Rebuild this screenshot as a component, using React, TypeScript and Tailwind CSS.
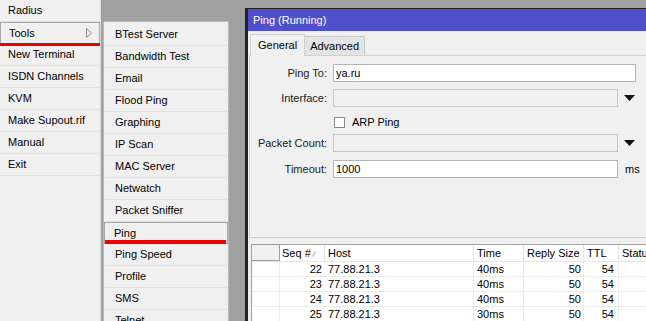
import React from "react";

const leftItems = ["Radius", "Tools", "New Terminal", "ISDN Channels", "KVM", "Make Supout.rif", "Manual", "Exit"];

const toolItems = [
  "BTest Server",
  "Bandwidth Test",
  "Email",
  "Flood Ping",
  "Graphing",
  "IP Scan",
  "MAC Server",
  "Netwatch",
  "Packet Sniffer",
  "Ping",
  "Ping Speed",
  "Profile",
  "SMS",
  "Telnet",
];

const rows = [
  { seq: 22, host: "77.88.21.3", time: "40ms", size: 50, ttl: 54 },
  { seq: 23, host: "77.88.21.3", time: "40ms", size: 50, ttl: 54 },
  { seq: 24, host: "77.88.21.3", time: "40ms", size: 50, ttl: 54 },
  { seq: 25, host: "77.88.21.3", time: "30ms", size: 50, ttl: 54 },
];

const DropArrow = () => (
  <svg width="11" height="6" viewBox="0 0 11 6" className="ml-[6px]">
    <polygon points="0,0 11,0 5.5,6" fill="#111" />
  </svg>
);

const Field = ({ label, value, disabled, arrow, suffix, mt }: { label: string; value?: string; disabled?: boolean; arrow?: boolean; suffix?: string; mt: string }) => (
  <div className={`flex items-center h-[18px] ${mt}`}>
    <div className="w-[78px] text-right pr-[1px] text-[#1a1a1a]">{label}</div>
    <div
      className={`ml-[5px] h-[18px] flex items-center px-[2px] border ${
        disabled ? "bg-[#f0f0f0] border-[#c8c8c8]" : "bg-white border-[#b4b4b4]"
      } ${arrow || suffix ? "w-[285px]" : "w-[303px]"}`}
    >
      {value}
    </div>
    {arrow && <DropArrow />}
    {suffix && <span className="ml-[7px]">{suffix}</span>}
  </div>
);

export default function App() {
  return (
    <div className="w-[646px] h-[321px] overflow-hidden flex bg-[#a0a0a0] text-[11px] text-black leading-none font-['Liberation_Sans',Arial,sans-serif]">
      {/* main menu */}
      <div className="w-[101px] h-full bg-[#f0f0f0] border-r border-[#dcdcdc] flex flex-col shrink-0">
        {leftItems.map((it) => (
          <div
            key={it}
            className={`relative h-[22px] flex items-center pl-[8px] shrink-0 ${
              it === "Tools" ? "border border-[#a8a8a8] pl-[7px]" : "border-b border-[#e2e2e2]"
            }`}
          >
            {it}
            {it === "Tools" && (
              <>
                <svg width="6" height="10" viewBox="0 0 6 10" className="absolute right-[7px] top-[5px]">
                  <polyline points="0.5,0.5 0.5,9.5 5.5,5 0.5,0.5" fill="none" stroke="#8a8a8a" strokeWidth="1" />
                </svg>
                <div className="absolute left-[-1px] right-[-1px] bottom-[-3px] h-[3px] bg-[#ee0000]" />
              </>
            )}
          </div>
        ))}
      </div>

      {/* tools submenu */}
      <div className="ml-[2px] mt-[21px] w-[126px] shrink-0 bg-[#f0f0f0] border-l border-t border-r border-[#b8b8b8] pt-[2px] flex flex-col">
        {toolItems.map((it) => (
          <div
            key={it}
            className={`relative h-[22px] shrink-0 flex items-center ${
              it === "Ping" ? "border border-[#a8a8a8] pl-[9px]" : "border-b border-[#e2e2e2] pl-[10px] mx-[1px]"
            }`}
          >
            {it}
            {it === "Ping" && <div className="absolute left-0 right-[1px] bottom-[-1px] h-[4px] bg-[#ee0000]" />}
          </div>
        ))}
      </div>

      {/* ping window */}
      <div className="ml-[16px] mt-[8px] flex-1 flex flex-col bg-[#f0f0f0] border-l-[3px] border-t border-[#222]">
        <div className="h-[22px] bg-[#5050cd] text-white flex items-center pl-[5px] shrink-0">Ping (Running)</div>

        <div className="flex items-end h-[24px] pl-[2px] shrink-0">
          <div className="h-[22px] px-[7px] flex items-center bg-[#f0f0f0] border-l border-t border-r border-[#d0d0d0] relative top-[1px] z-10">
            General
          </div>
          <div className="h-[19px] px-[5px] flex items-center bg-[#e4e4e4] border-t border-r border-[#c8c8c8]">Advanced</div>
        </div>

        <div className="ml-[1px] mr-[1px] h-[183px] shrink-0 border border-[#d0d0d0] flex flex-col">
          <Field label="Ping To:" value="ya.ru" mt="mt-[8px]" />
          <Field label="Interface:" disabled arrow mt="mt-[7px]" />
          <div className="flex items-center h-[18px] mt-[6px] pl-[84px]">
            <div className="w-[11px] h-[11px] bg-white border border-[#8a8a8a]" />
            <span className="ml-[7px]">ARP Ping</span>
          </div>
          <Field label="Packet Count:" disabled arrow mt="mt-[3px]" />
          <Field label="Timeout:" value="1000" suffix="ms" mt="mt-[8px]" />
        </div>

        <div className="mt-[6px] ml-[3px] flex-1 bg-white border-l border-t border-[#a0a0a0] flex flex-col">
          <div className="flex h-[17px] shrink-0 border-b border-[#e5e5e5]">
            <div className="w-[28px] shrink-0 bg-[#f0f0f0] border-r border-b border-[#a0a0a0]" />
            <div className="w-[45px] shrink-0 border-r border-[#e5e5e5] flex items-center pl-[2px] relative">
              Seq #
              <svg width="4" height="6" viewBox="0 0 4 6" className="absolute right-[8px] top-[6px]">
                <line x1="0.5" y1="5.5" x2="3.5" y2="0.5" stroke="#aaa" />
              </svg>
            </div>
            <div className="w-[149px] shrink-0 border-r border-[#e5e5e5] flex items-center pl-[3px]">Host</div>
            <div className="w-[50px] shrink-0 border-r border-[#e5e5e5] flex items-center pl-[3px]">Time</div>
            <div className="w-[60px] shrink-0 border-r border-[#e5e5e5] flex items-center pl-[3px]">Reply Size</div>
            <div className="w-[35px] shrink-0 border-r border-[#e5e5e5] flex items-center pl-[3px]">TTL</div>
            <div className="flex-1 flex items-center pl-[3px] whitespace-nowrap">Status</div>
          </div>
          {rows.map((r) => (
            <div key={r.seq} className="flex h-[15px] shrink-0 border-b border-[#ececec]">
              <div className="w-[28px] shrink-0 border-r border-[#ececec]" />
              <div className="w-[45px] shrink-0 flex items-center justify-end pr-[3px]">{r.seq}</div>
              <div className="w-[149px] shrink-0 border-r border-[#ececec] flex items-center pl-[3px]">{r.host}</div>
              <div className="w-[50px] shrink-0 border-r border-[#ececec] flex items-center pl-[3px]">{r.time}</div>
              <div className="w-[60px] shrink-0 border-r border-[#ececec] flex items-center justify-end pr-[2px]">{r.size}</div>
              <div className="w-[35px] shrink-0 border-r border-[#ececec] flex items-center justify-end pr-[4px]">{r.ttl}</div>
              <div className="flex-1" />
            </div>
          ))}
        </div>
      </div>
    </div>
  );
}
